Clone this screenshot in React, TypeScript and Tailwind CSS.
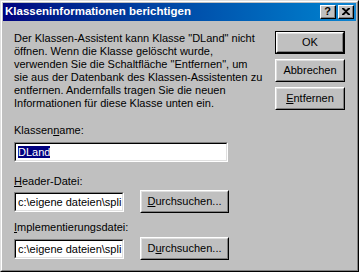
import React from "react";

const font = { fontFamily: '"Liberation Sans", Arial, sans-serif' };

function Btn({ children, def = false, w = "w-[70px]", h = "h-[23px]" }: { children: React.ReactNode; def?: boolean; w?: string; h?: string }) {
  const inner = (
    <div className="h-full w-full border border-t-white border-l-white border-r-black border-b-black">
      <div className="h-full w-full border border-t-[#dfdfdf] border-l-[#dfdfdf] border-r-[#808080] border-b-[#808080] flex items-center justify-center text-[11px] text-black bg-[#c0c0c0]">
        {children}
      </div>
    </div>
  );
  return def ? (
    <div className={`${w} ${h} border border-black`}>{inner}</div>
  ) : (
    <div className={`${w} ${h}`}>{inner}</div>
  );
}

function Field({ w, children }: { w: string; children: React.ReactNode }) {
  return (
    <div className={`${w} h-[20px] border border-t-[#808080] border-l-[#808080] border-r-white border-b-white`}>
      <div className="h-full w-full border border-t-black border-l-black border-r-[#dfdfdf] border-b-[#dfdfdf] bg-white overflow-hidden whitespace-nowrap text-[11px] leading-[16px] pl-[2px] text-black">
        {children}
      </div>
    </div>
  );
}

function TitleBtn({ children }: { children: React.ReactNode }) {
  return (
    <div className="w-[16px] h-[14px] border border-t-white border-l-white border-r-black border-b-black bg-[#c0c0c0]">
      <div className="h-full w-full border-r border-b border-r-[#808080] border-b-[#808080] flex items-center justify-center text-[11px] font-bold leading-none text-black">
        {children}
      </div>
    </div>
  );
}

export default function App() {
  return (
    <div className="w-[359px] h-[272px] bg-[#c0c0c0]" style={font}>
      <div className="w-full h-full border border-t-[#dfdfdf] border-l-[#dfdfdf] border-r-black border-b-black">
        <div className="w-full h-full border border-t-white border-l-white border-r-[#808080] border-b-[#808080] p-px flex flex-col">
          <div className="h-[18px] flex items-center justify-between pl-[2px] pr-[2px] bg-gradient-to-r from-[#000080] to-[#1084d0]">
            <span className="text-white font-bold text-[11.5px] leading-none">Klasseninformationen berichtigen</span>
            <div className="flex gap-[2px]">
              <TitleBtn>?</TitleBtn>
              <TitleBtn>
                <svg width="8" height="7" viewBox="0 0 8 7">
                  <path d="M0 0h2l2 2 2-2h2v1L5 3.5 8 6v1H6L4 5 2 7H0V6l3-2.5L0 1z" fill="#000" />
                </svg>
              </TitleBtn>
            </div>
          </div>
          <div className="flex pl-[11px] pt-[10px] text-[11px] text-black">
            <div className="w-[262px] flex flex-col">
              <p className="leading-[13px] mt-px">
                Der Klassen-Assistent kann Klasse "DLand" nicht
                <br />
                öffnen. Wenn die Klasse gelöscht wurde,
                <br />
                verwenden Sie die Schaltfläche "Entfernen", um
                <br />
                sie aus der Datenbank des Klassen-Assistenten zu
                <br />
                entfernen. Andernfalls tragen Sie die neuen
                <br />
                Informationen für diese Klasse unten ein.
              </p>
              <div className="mt-[14px] leading-[13px]">
                Klassen<span className="underline">n</span>ame:
              </div>
              <div className="mt-[5px]">
                <Field w="w-[214px]">
                  <span className="bg-[#000080] text-white">DLand</span>
                </Field>
              </div>
              <div className="mt-[13px] leading-[13px]">
                <span className="underline">H</span>eader-Datei:
              </div>
              <div className="mt-[2px] flex items-center gap-[16px]">
                <Field w="w-[110px]">c:\eigene dateien\spli</Field>
                <Btn w="w-[89px]">
                  <span>
                    <span className="underline">D</span>urchsuchen...
                  </span>
                </Btn>
              </div>
              <div className="mt-[8px] leading-[13px]">
                <span className="underline">I</span>mplementierungsdatei:
              </div>
              <div className="mt-[3px] flex items-center gap-[16px]">
                <Field w="w-[110px]">c:\eigene dateien\spli</Field>
                <Btn w="w-[89px]">
                  <span>
                    D<span className="underline">u</span>rchsuchen...
                  </span>
                </Btn>
              </div>
            </div>
            <div className="flex flex-col gap-[5px] ml-[-1px]">
              <Btn def>OK</Btn>
              <Btn>Abbrechen</Btn>
              <Btn>
                <span>
                  <span className="underline">E</span>ntfernen
                </span>
              </Btn>
            </div>
          </div>
        </div>
      </div>
    </div>
  );
}
